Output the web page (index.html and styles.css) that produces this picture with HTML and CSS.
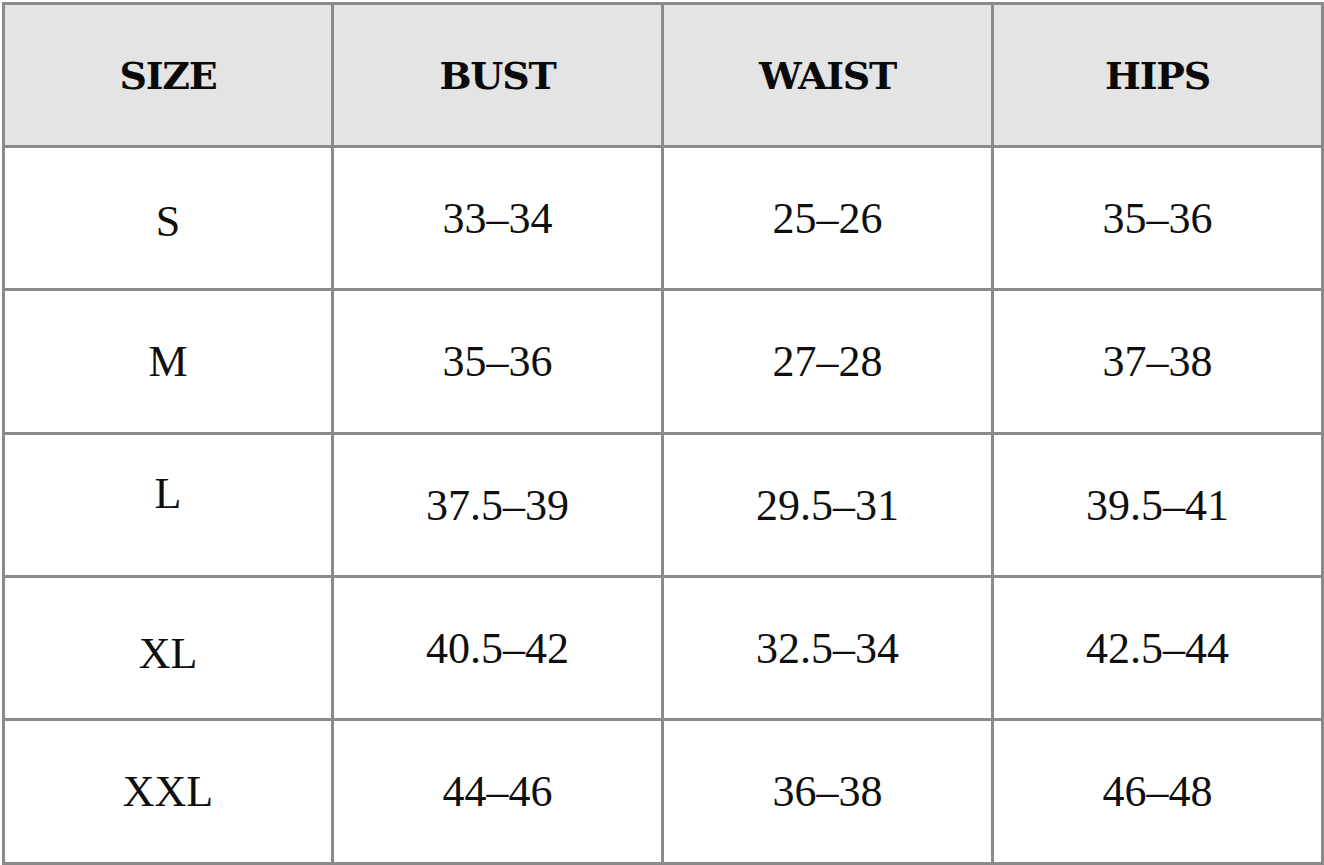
FILE: index.html
```html
<!DOCTYPE html>
<html lang="en">
<head>
<meta charset="utf-8">
<title>Size Chart</title>
<link rel="stylesheet" href="styles.css">
</head>
<body>
<div class="wrap">
<table class="chart">
  <thead>
    <tr class="row-head">
      <th class="c1">SIZE</th>
      <th>BUST</th>
      <th>WAIST</th>
      <th>HIPS</th>
    </tr>
  </thead>
  <tbody>
    <tr class="row-a">
      <td class="c1 sz nudge-down">S</td>
      <td>33–34</td>
      <td>25–26</td>
      <td>35–36</td>
    </tr>
    <tr class="row-b">
      <td class="c1 sz">M</td>
      <td>35–36</td>
      <td>27–28</td>
      <td>37–38</td>
    </tr>
    <tr class="row-a">
      <td class="c1 sz nudge-up">L</td>
      <td>37.5–39</td>
      <td>29.5–31</td>
      <td>39.5–41</td>
    </tr>
    <tr class="row-a">
      <td class="c1 sz nudge-down2">XL</td>
      <td>40.5–42</td>
      <td>32.5–34</td>
      <td>42.5–44</td>
    </tr>
    <tr class="row-b">
      <td class="c1 sz">XXL</td>
      <td>44–46</td>
      <td>36–38</td>
      <td>46–48</td>
    </tr>
  </tbody>
</table>
</div>
</body>
</html>
```

FILE: styles.css
```css
html, body {
  margin: 0;
  padding: 0;
  background: #ffffff;
}

.wrap {
  padding: 2px 0 0 2px;
}

.chart {
  border-collapse: separate;
  border-spacing: 0;
  border-top: 3px solid #8a8a8a;
  border-left: 3px solid #8a8a8a;
  table-layout: fixed;
  font-family: "Liberation Serif", "Times New Roman", serif;
  color: #111111;
}

.chart th,
.chart td {
  border-right: 3px solid #8a8a8a;
  border-bottom: 3px solid #8a8a8a;
  width: 327px;
  padding: 0;
  text-align: center;
  vertical-align: middle;
  box-sizing: content-box;
}

.chart .c1 {
  width: 326px;
}

.chart th {
  background: #e4e4e4;
  font-family: "DejaVu Serif", "Liberation Serif", serif;
  font-weight: bold;
  font-size: 38px;
  letter-spacing: -1.2px;
  color: #0a0a0a;
}

.chart td {
  font-size: 44px;
  color: #0f0f0f;
}

.row-head th { height: 140px; }
.row-a td { height: 140px; }
.row-b td { height: 141px; }

.chart td.nudge-down {
  padding-top: 6px;
}
.chart td.nudge-down2 {
  padding-top: 10px;
}
.chart td.nudge-up {
  padding-bottom: 24px;
}
.row-a td.nudge-down { height: 134px; }
.row-a td.nudge-down2 { height: 130px; }
.row-a td.nudge-up { height: 116px; }
```
